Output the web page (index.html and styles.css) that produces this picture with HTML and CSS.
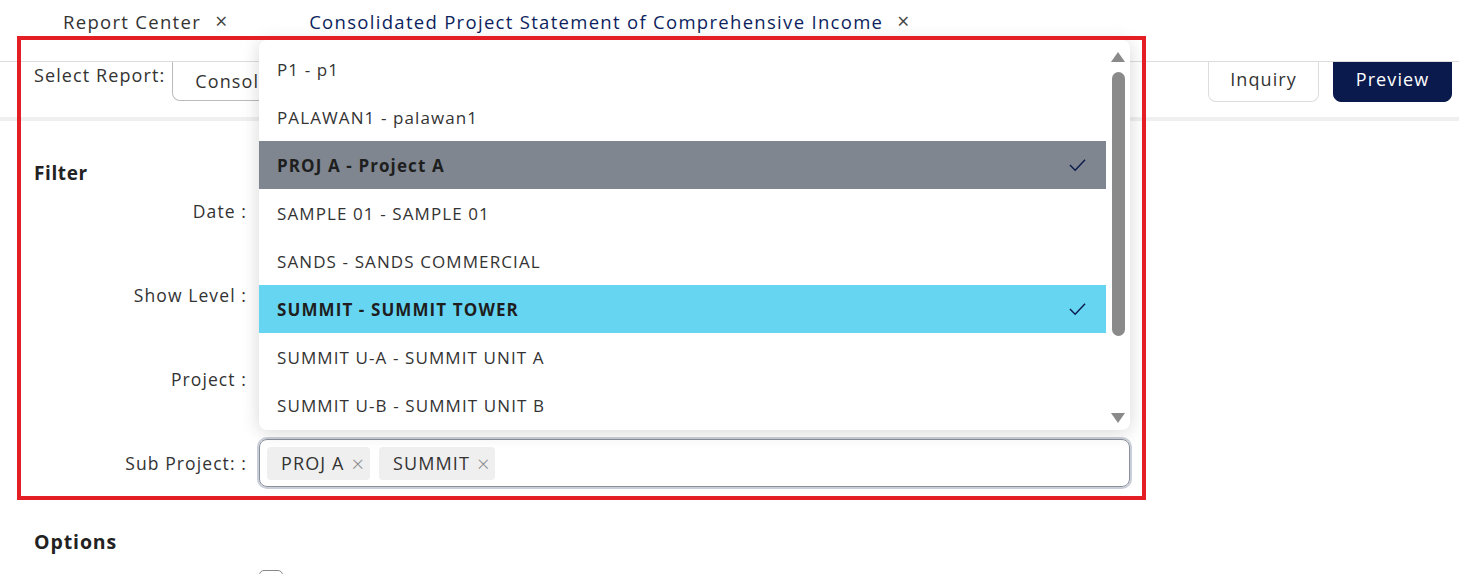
FILE: index.html
```html
<!DOCTYPE html>
<html>
<head>
<meta charset="utf-8">
<link rel="stylesheet" href="styles.css">
</head>
<body>
<div class="tabs">
  <div class="tab">Report Center <span class="tab-x">×</span></div>
  <div class="tab active">Consolidated Project Statement of Comprehensive Income <span class="tab-x">×</span></div>
</div>
<div class="toolbar">
  <div class="sel-label">Select Report:</div>
  <div class="select-box">Consolidated Project Statement of Comprehensive Income</div>
  <button class="btn btn-light">Inquiry</button>
  <button class="btn btn-dark">Preview</button>
</div>
<div class="content">
  <h3 class="section">Filter</h3>
  <div class="form">
    <div class="row"><label>Date :</label><div class="field"></div></div>
    <div class="row"><label>Show Level :</label><div class="field"></div></div>
    <div class="row"><label>Project :</label><div class="field"></div></div>
    <div class="row"><label>Sub Project: :</label>
      <div class="field tags-field">
        <span class="tag">PROJ A <span class="tag-x">×</span></span>
        <span class="tag">SUMMIT <span class="tag-x">×</span></span>
      </div>
    </div>
  </div>
  <h3 class="section options">Options</h3>
  <div class="row"><label></label><span class="checkbox"></span></div>
</div>

<div class="dropdown">
  <ul class="list">
    <li>P1 - p1</li>
    <li>PALAWAN1 - palawan1</li>
    <li class="sel-gray">PROJ A - Project A<svg class="check" viewBox="0 0 18 14"><path d="M1 7 L6.5 12.5 L17 1.5" fill="none" stroke="#0b1a4d" stroke-width="1.5"/></svg></li>
    <li>SAMPLE 01 - SAMPLE 01</li>
    <li>SANDS - SANDS COMMERCIAL</li>
    <li class="sel-cyan">SUMMIT - SUMMIT TOWER<svg class="check" viewBox="0 0 18 14"><path d="M1 7 L6.5 12.5 L17 1.5" fill="none" stroke="#0b1a4d" stroke-width="1.5"/></svg></li>
    <li>SUMMIT U-A - SUMMIT UNIT A</li>
    <li>SUMMIT U-B - SUMMIT UNIT B</li>
  </ul>
  <div class="scrollbar">
    <span class="arrow up"></span>
    <span class="thumb"></span>
    <span class="arrow down"></span>
  </div>
</div>
<div class="annot"></div>
</body>
</html>
```
FILE: styles.css
```css
* { box-sizing: border-box; }
html, body { margin: 0; padding: 0; background: #fff; }
body {
  font-family: "Open Sans", "Liberation Sans", sans-serif;
  color: #333;
  width: 1459px;
  height: 574px;
  overflow: hidden;
  position: relative;
  letter-spacing: 1.1px;
}
.tabs {
  height: 62px;
  display: flex;
  align-items: flex-start;
  padding: 8px 0 0 63px;
  gap: 82px;
  border-bottom: 1px solid #dcdcdc;
  background: #fff;
  position: relative;
  z-index: 1;
  font-size: 18.5px;
  letter-spacing: 1.3px;
}
.tab { line-height: 26px; color: #333; white-space: nowrap; }
.tab.active { color: #0d1f5e; }
.tab-x { color: #444; margin-left: 8px; font-size: 21px; letter-spacing: 0; }
.toolbar {
  height: 62px;
  margin-top: -3px;
  display: flex;
  align-items: flex-end;
  padding: 0 7px 15px 34px;
  border-bottom: 4px solid #efefef;
  font-size: 18px;
}
.sel-label { align-self: center; padding-bottom: 12px; margin-right: 7px; white-space: nowrap; }
.select-box {
  width: 948px;
  height: 40px;
  border: 1px solid #bbb;
  border-top: none;
  border-radius: 0 0 8px 8px;
  padding: 0 22px;
  display: flex;
  align-items: center;
  font-size: 18px;
  overflow: hidden;
  white-space: nowrap;
  margin-bottom: 1px;
}
.btn {
  height: 41px;
  border-radius: 0 0 8px 8px;
  font-family: inherit;
  font-size: 18px;
  letter-spacing: 1.1px;
  padding: 0 0 5px 0;
}
.btn-light { margin-left: auto; width: 111px; background: #fff; border: 1px solid #ddd; border-top: none; color: #333; margin-right: 14px; }
.btn-dark { width: 119px; background: #0b1a4d; border: 1px solid #0b1a4d; color: #fff; }
.content { padding: 0 0 0 34px; }
.section { margin: 0; font-size: 19px; font-weight: 700; color: #222; line-height: 24px; padding-top: 40px; letter-spacing: 0.6px; }
.form { display: flex; flex-direction: column; gap: 36px; margin-top: 2px; }
.row { display: flex; align-items: center; gap: 12px; }
.row label { width: 213px; text-align: right; font-size: 17.5px; color: #333; }
.field {
  width: 871px;
  height: 48px;
  border: 1px solid #999;
  border-radius: 8px;
}
.tags-field {
  box-shadow: 0 0 0 2px #c9ced8;
  border-color: #8a8f99;
  display: flex;
  align-items: center;
  gap: 9px;
  padding-left: 7px;
}
.tag {
  background: #efefef;
  border-radius: 4px;
  height: 33px;
  padding: 0 6px 0 14px;
  display: flex;
  align-items: center;
  font-size: 18px;
  color: #333;
}
.tag-x { color: #888; margin-left: 7px; font-size: 22px; letter-spacing: 0; font-weight: 300; }
.options { padding-top: 43px; font-size: 19.5px; letter-spacing: 0.9px; }
.checkbox {
  display: inline-block;
  width: 24px; height: 24px;
  border: 1px solid #888;
  border-radius: 5px;
  margin-top: 16px;
}
.dropdown {
  position: absolute;
  left: 259px; top: 40px;
  width: 871px; height: 390px;
  background: #fff;
  border-radius: 8px;
  box-shadow: 0 2px 18px rgba(0,0,0,0.16);
  display: flex;
  z-index: 5;
}
.list { list-style: none; margin: 0; padding: 5px 0 0; width: 847px; }
.list li {
  height: 48px;
  display: flex;
  align-items: center;
  justify-content: space-between;
  padding: 0 20px 0 18px;
  font-size: 17px;
  color: #333;
}
.list li.sel-gray { background: #7f868f; font-weight: 700; color: #1e1e1e; }
.list li.sel-cyan { background: #66d5f2; font-weight: 700; color: #1e1e1e; }
.check { width: 17px; height: 14px; }
.scrollbar {
  width: 24px;
  display: flex;
  flex-direction: column;
  align-items: center;
  padding: 12px 4px 0 4px;
}
.arrow { width: 0; height: 0; border-left: 7px solid transparent; border-right: 7px solid transparent; }
.arrow.up { border-bottom: 10px solid #8a8a8a; }
.arrow.down { border-top: 10px solid #8a8a8a; margin-top: 77px; }
.thumb { width: 13px; height: 264px; background: #8a8a8a; border-radius: 7px; margin-top: 10px; }
.annot {
  position: absolute;
  left: 17px; top: 36px;
  width: 1129px; height: 464px;
  border: 4px solid #e31e24;
  z-index: 6;
  pointer-events: none;
}
```
